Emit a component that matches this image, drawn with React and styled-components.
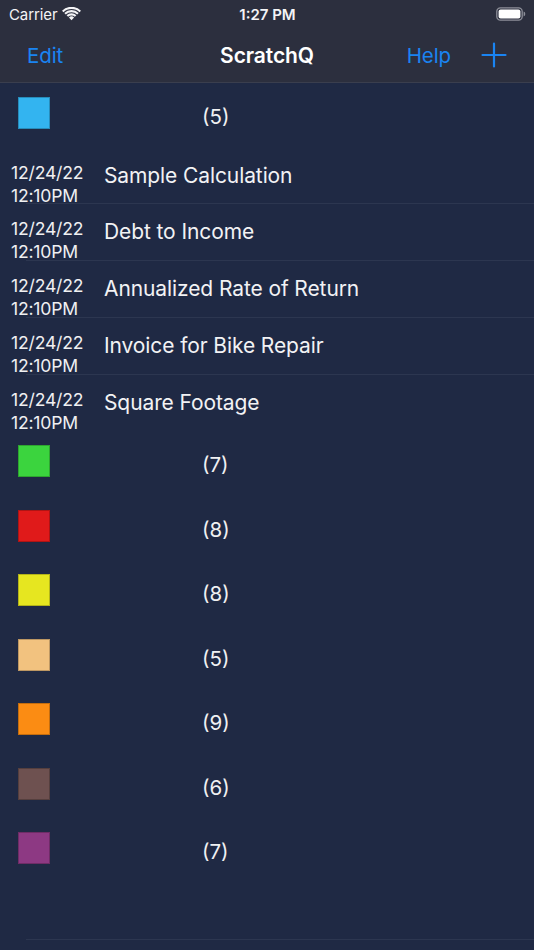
import React from "react";
import styled, { createGlobalStyle } from "styled-components";

const Global = createGlobalStyle`
  html, body { margin: 0; padding: 0; background: #1f2944; }
  body { font-family: Inter, "Noto Sans", "Liberation Sans", sans-serif; -webkit-font-smoothing: antialiased; }
`;

const Screen = styled.div`
  width: 534px;
  height: 950px;
  display: flex;
  flex-direction: column;
  background: #1f2944;
  color: #f2f2f4;
  overflow: hidden;
`;

const Header = styled.header`
  background: #2c2f3e;
  border-bottom: 1px solid #3a3e4e;
  display: flex;
  flex-direction: column;
`;

const StatusBar = styled.div`
  height: 28px;
  display: grid;
  grid-template-columns: 1fr auto 1fr;
  align-items: center;
  padding: 0 8px 0 9px;
  font-size: 15px;
  color: #f4f4f6;
`;

const StatusLeft = styled.div`
  display: flex;
  align-items: center;
  gap: 5px;
  letter-spacing: -0.1px;
`;

const Clock = styled.div`
  font-weight: 600;
  font-size: 15px;
`;

const StatusRight = styled.div`
  display: flex;
  justify-content: flex-end;
  align-items: center;
`;

const NavBar = styled.nav`
  height: 54px;
  display: grid;
  grid-template-columns: 1fr auto 1fr;
  align-items: center;
  padding: 0 27px 0 27px;
`;

const NavButton = styled.span`
  color: #1a84f2;
  font-size: 20.5px;
  letter-spacing: -0.1px;
`;

const NavTitle = styled.h1`
  margin: 0;
  font-size: 21px;
  font-weight: 600;
  color: #ffffff;
  letter-spacing: -0.1px;
`;

const NavRight = styled.div`
  display: flex;
  justify-content: flex-end;
  align-items: center;
  gap: 30px;
`;

const List = styled.div`
  flex: 1;
  display: flex;
  flex-direction: column;
`;

const GroupRow = styled.div`
  height: 64.5px;
  display: grid;
  grid-template-columns: 50px 1fr;
  align-items: start;
  padding-left: 18px;
  box-sizing: border-box;
`;

const Swatch = styled.div`
  width: 32px;
  height: 32px;
  margin-top: 14px;
  box-sizing: border-box;
  background: ${(p) => p.$color};
  border: 1px solid rgba(0, 0, 0, 0.22);
`;

const Count = styled.div`
  margin-top: 21px;
  padding-left: 134px;
  font-size: 20.5px;
  color: #f0f0f2;
`;

const ItemRow = styled.div`
  height: 56.75px;
  display: grid;
  grid-template-columns: 93px 1fr;
  padding-left: 11px;
  box-sizing: border-box;
  position: relative;
  ${(p) =>
    p.$sep &&
    `&::after {
      content: "";
      position: absolute;
      left: 26px; right: 0; bottom: 0;
      height: 1px;
      background: #2c3650;
    }`}
`;

const DateBlock = styled.div`
  font-size: 17.6px;
  line-height: 23px;
  padding-top: 13px;
  color: #f0f0f2;
  letter-spacing: -0.2px;
  position: relative;
  z-index: 1;
  white-space: nowrap;
`;

const Title = styled.div`
  font-size: 21px;
  padding-top: 15px;
  color: #f2f2f4;
  letter-spacing: -0.1px;
  white-space: nowrap;
`;

const Footer = styled.div`
  margin-top: auto;
  margin-bottom: 10px;
  margin-left: 26px;
  height: 1px;
  background: #2c3650;
`;

const Wifi = () => (
  <svg width="19" height="14" viewBox="0 0 19 14">
    <path d="M9.5 13.2 L6.9 10.5 A3.7 3.7 0 0 1 12.1 10.5 Z" fill="#f4f4f6" />
    <path d="M4.6 8.3 A7 7 0 0 1 14.4 8.3 L12.9 9.8 A4.9 4.9 0 0 0 6.1 9.8 Z" fill="#f4f4f6" />
    <path d="M2.3 6 A10.3 10.3 0 0 1 16.7 6 L15.2 7.5 A8.2 8.2 0 0 0 3.8 7.5 Z" fill="#f4f4f6" />
    <path d="M0 3.7 A13.5 13.5 0 0 1 19 3.7 L17.5 5.2 A11.4 11.4 0 0 0 1.5 5.2 Z" fill="#f4f4f6" />
  </svg>
);

const Battery = () => (
  <svg width="30" height="14" viewBox="0 0 30 14">
    <rect x="0.8" y="0.8" width="25.4" height="12.4" rx="3.6" fill="none" stroke="#8d8f99" strokeWidth="1.3" />
    <rect x="2.6" y="2.6" width="21.8" height="8.8" rx="2" fill="#ffffff" />
    <path d="M27.6 4.6 Q29.3 5 29.3 7 Q29.3 9 27.6 9.4 Z" fill="#8d8f99" />
  </svg>
);

const Plus = () => (
  <svg width="26" height="26" viewBox="0 0 26 26">
    <path d="M13 1.5 V24.5 M1.5 13 H24.5" stroke="#1a84f2" strokeWidth="2.2" strokeLinecap="round" />
  </svg>
);

const groups = [
  { color: "#33b4f0", count: 5, items: ["Sample Calculation", "Debt to Income", "Annualized Rate of Return", "Invoice for Bike Repair", "Square Footage"] },
  { color: "#3bd43e", count: 7 },
  { color: "#e01a1a", count: 8 },
  { color: "#e6e620", count: 8 },
  { color: "#f2c27f", count: 5 },
  { color: "#fb8c13", count: 9 },
  { color: "#6e5150", count: 6 },
  { color: "#8d3983", count: 7 },
];

export default function App() {
  return (
    <Screen>
      <Global />
      <Header>
        <StatusBar>
          <StatusLeft>
            Carrier <Wifi />
          </StatusLeft>
          <Clock>1:27 PM</Clock>
          <StatusRight>
            <Battery />
          </StatusRight>
        </StatusBar>
        <NavBar>
          <NavButton>Edit</NavButton>
          <NavTitle>ScratchQ</NavTitle>
          <NavRight>
            <NavButton>Help</NavButton>
            <Plus />
          </NavRight>
        </NavBar>
      </Header>
      <List>
        {groups.map((g, gi) => (
          <React.Fragment key={gi}>
            <GroupRow>
              <Swatch $color={g.color} />
              <Count>({g.count})</Count>
            </GroupRow>
            {(g.items || []).map((t, i, arr) => (
              <ItemRow key={t} $sep={i < arr.length - 1}>
                <DateBlock>
                  12/24/22
                  <br />
                  12:10PM
                </DateBlock>
                <Title>{t}</Title>
              </ItemRow>
            ))}
          </React.Fragment>
        ))}
        <Footer />
      </List>
    </Screen>
  );
}
